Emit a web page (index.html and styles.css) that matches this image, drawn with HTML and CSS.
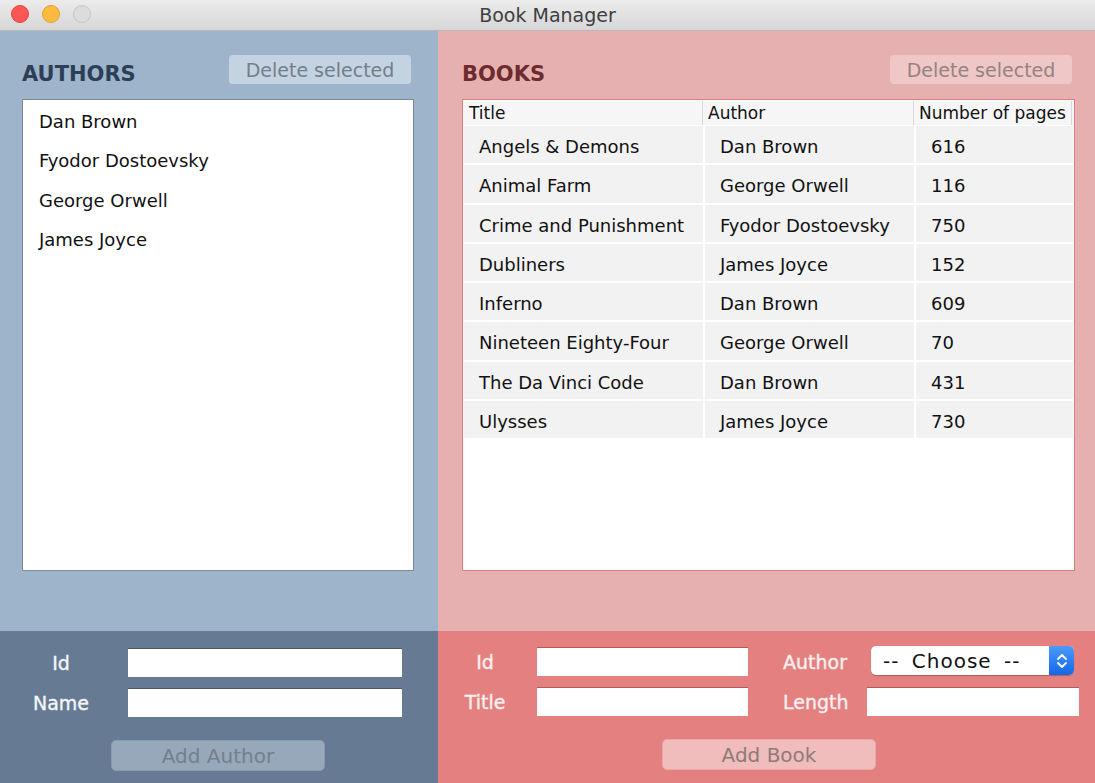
FILE: index.html
```html
<!DOCTYPE html>
<html>
<head>
<meta charset="utf-8">
<title>Book Manager</title>
<link rel="stylesheet" href="styles.css">
</head>
<body>
<div class="window">
  <div class="titlebar">
    <div class="lights">
      <span class="light red"></span>
      <span class="light yellow"></span>
      <span class="light gray"></span>
    </div>
    <div class="title">Book Manager</div>
  </div>
  <div class="main">
    <section class="panel authors">
      <div class="panel-head">
        <h2 class="heading">AUTHORS</h2>
        <button class="btn btn-blue">Delete selected</button>
      </div>
      <ul class="list">
        <li>Dan Brown</li>
        <li>Fyodor Dostoevsky</li>
        <li>George Orwell</li>
        <li>James Joyce</li>
      </ul>
    </section>
    <section class="panel books">
      <div class="panel-head">
        <h2 class="heading">BOOKS</h2>
        <button class="btn btn-red">Delete selected</button>
      </div>
      <div class="table">
        <div class="thead">
          <div class="th">Title</div>
          <div class="th">Author</div>
          <div class="th last">Number of pages</div>
        </div>
        <div class="tbody">
          <div class="td">Angels &amp; Demons</div><div class="td">Dan Brown</div><div class="td">616</div>
          <div class="td">Animal Farm</div><div class="td">George Orwell</div><div class="td">116</div>
          <div class="td">Crime and Punishment</div><div class="td">Fyodor Dostoevsky</div><div class="td">750</div>
          <div class="td">Dubliners</div><div class="td">James Joyce</div><div class="td">152</div>
          <div class="td">Inferno</div><div class="td">Dan Brown</div><div class="td">609</div>
          <div class="td">Nineteen Eighty-Four</div><div class="td">George Orwell</div><div class="td">70</div>
          <div class="td">The Da Vinci Code</div><div class="td">Dan Brown</div><div class="td">431</div>
          <div class="td">Ulysses</div><div class="td">James Joyce</div><div class="td">730</div>
        </div>
      </div>
    </section>
  </div>
  <div class="bottom">
    <div class="form authors-form">
      <div class="fields">
        <label class="lbl">Id</label><input class="field">
        <label class="lbl">Name</label><input class="field">
      </div>
      <button class="btn btn-add-blue">Add Author</button>
    </div>
    <div class="form books-form">
      <div class="fields2">
        <label class="lbl lbl-mid">Id</label><input class="field">
        <label class="lbl lbl-left">Author</label>
        <div class="select">
          <span class="select-text">-- Choose --</span>
          <span class="stepper">
            <svg width="14" height="20" viewBox="0 0 14 20"><path d="M3 8 L7 4 L11 8" fill="none" stroke="#fff" stroke-width="1.8" stroke-linecap="round" stroke-linejoin="round"/><path d="M3 12 L7 16 L11 12" fill="none" stroke="#fff" stroke-width="1.8" stroke-linecap="round" stroke-linejoin="round"/></svg>
          </span>
        </div>
        <label class="lbl lbl-mid">Title</label><input class="field">
        <label class="lbl lbl-left">Length</label><input class="field f-len">
      </div>
      <button class="btn btn-add-red">Add Book</button>
    </div>
  </div>
</div>
</body>
</html>
```
FILE: styles.css
```css
* { box-sizing: border-box; }
html, body { margin: 0; padding: 0; }
body {
  width: 1095px;
  height: 783px;
  overflow: hidden;
  font-family: "DejaVu Sans", "Noto Sans", sans-serif;
}
.window { width: 1095px; height: 783px; display: flex; flex-direction: column; }

.titlebar {
  height: 31px;
  background: linear-gradient(#ececec, #d6d6d6);
  border-bottom: 1px solid #b9b9b9;
  display: flex;
  align-items: center;
  position: relative;
}
.lights { display: flex; gap: 13px; padding-left: 11px; position: relative; top: -1px; z-index: 1; }
.light { width: 18px; height: 18px; border-radius: 50%; display: block; }
.light.red { background: #fc5753; border: 1px solid #e0443e; }
.light.yellow { background: #fdbc40; border: 1px solid #dea236; }
.light.gray { background: #dcdcdc; border: 1px solid #c6c6c6; }
.title {
  position: absolute;
  left: 0; right: 0; top: 0; bottom: 0;
  display: flex; align-items: center; justify-content: center;
  font-size: 19px;
  color: #3f3f3f;
}

.main { height: 600px; display: flex; }
.panel { display: flex; flex-direction: column; }
.authors { width: 438px; background: #9db4ca; padding: 24px 24px 0 22px; }
.books { flex: 1; background: #e6b0b0; padding: 24px 20px 0 24px; }

.panel-head {
  height: 29px;
  display: flex;
  justify-content: space-between;
  align-items: flex-end;
}
.heading {
  margin: 0;
  font-family: "DejaVu Sans", sans-serif;
  font-weight: bold;
  font-size: 21px;
  line-height: 24px;
  position: relative;
  top: 2px;
}
.authors .heading { color: #2d3f56; }
.books .heading { color: #6e2b2e; }

.btn {
  font-family: "DejaVu Sans", sans-serif;
  font-size: 19px;
  border: none;
  border-radius: 4px;
  height: 29px;
  padding: 0;
  width: 182px;
}
.authors .btn { margin-right: 3px; }
.books .btn { margin-right: 3px; }
.btn-blue { background: #c4d3e1; color: #737e8c; }
.btn-red { background: #f0c7c7; color: #958282; }

.list {
  list-style: none;
  margin: 15px 0 0 0;
  padding: 8px 0 0 16px;
  height: 472px;
  background: #fff;
  border: 1px solid #7a8a9c;
}
.list li {
  height: 39.4px;
  line-height: 28px;
  font-size: 18px;
  color: #111;
}

.table {
  margin-top: 15px;
  height: 472px;
  background: #fff;
  border: 1px solid #d97f80;
  padding: 1px 1px 0 1px;
}
.thead {
  display: grid;
  grid-template-columns: 239px 211px 1fr;
  height: 25px;
  background: #f6f6f6;
  border-bottom: 1px solid #fff;
}
.th {
  font-size: 17px;
  line-height: 24px;
  color: #111;
  padding-left: 5px;
  border-right: 1px solid #d9d9d9;
}
.th.last { margin-right: 1px; }
.tbody {
  display: grid;
  grid-template-columns: 239px 209px 1fr;
  grid-auto-rows: 37.3px;
  column-gap: 2px;
  row-gap: 2px;
}
.td {
  background: #f2f2f2;
  font-size: 18px;
  line-height: 37px;
  padding-top: 2px;
  color: #111;
  padding-left: 15px;
}

.bottom { height: 152px; display: flex; }
.form { display: flex; flex-direction: column; }
.authors-form { width: 438px; background: #667b93; padding: 17px 0 0 0; }
.books-form { flex: 1; background: #e58080; padding: 16px 0 0 0; }

.fields {
  display: grid;
  grid-template-columns: 122px 274px;
  column-gap: 6px;
  row-gap: 11px;
  align-items: center;
}
.lbl {
  font-size: 19px;
  text-align: center;
  -webkit-text-stroke: 0.35px currentColor;
}
.authors-form .lbl { color: #f4f6f9; }
.books-form .lbl { color: #fdf0f0; }
.field {
  height: 29px;
  border: none;
  border-top: 1px solid #555;
  background: #fff;
  margin: 0;
  padding: 0;
}
.authors-form .field { border-top-color: #4b5868; }
.books-form .field { border-top-color: #b25a5a; }

.btn-add-blue {
  margin: 23px 0 0 111px;
  width: 214px;
  height: 31px;
  font-size: 20px;
  background: #97a8bb;
  color: #737f8d;
  border: 1px solid #8a9bb0;
  border-radius: 5px;
}
.btn-add-red {
  margin: 23px 0 0 224px;
  width: 214px;
  height: 31px;
  font-size: 20px;
  background: #f0bcbc;
  color: #8f7a7a;
  border: 1px solid #e8a9a9;
  border-radius: 5px;
}

.fields2 {
  display: grid;
  grid-template-columns: 99px 211px 119px 212px;
  row-gap: 11px;
  align-items: center;
}
.lbl-mid { padding-right: 5px; }
.lbl-left { text-align: left; padding-left: 35px; }
.f-len { width: 212px; margin-left: 0; }

.select {
  height: 29px;
  width: 203px;
  margin-left: 4px;
  background: #fff;
  border-radius: 5px;
  display: flex;
  align-items: center;
  justify-content: space-between;
  overflow: hidden;
  box-shadow: 0 1px 1px rgba(0,0,0,0.25);
  position: relative;
  top: -1px;
}
.select-text {
  font-size: 20px;
  color: #111;
  padding-left: 12px;
  letter-spacing: 1px;
  word-spacing: 5px;
}
.stepper {
  width: 25px;
  height: 29px;
  background: linear-gradient(#4a9bfb, #1566e6);
  display: flex;
  align-items: center;
  justify-content: center;
}
```
